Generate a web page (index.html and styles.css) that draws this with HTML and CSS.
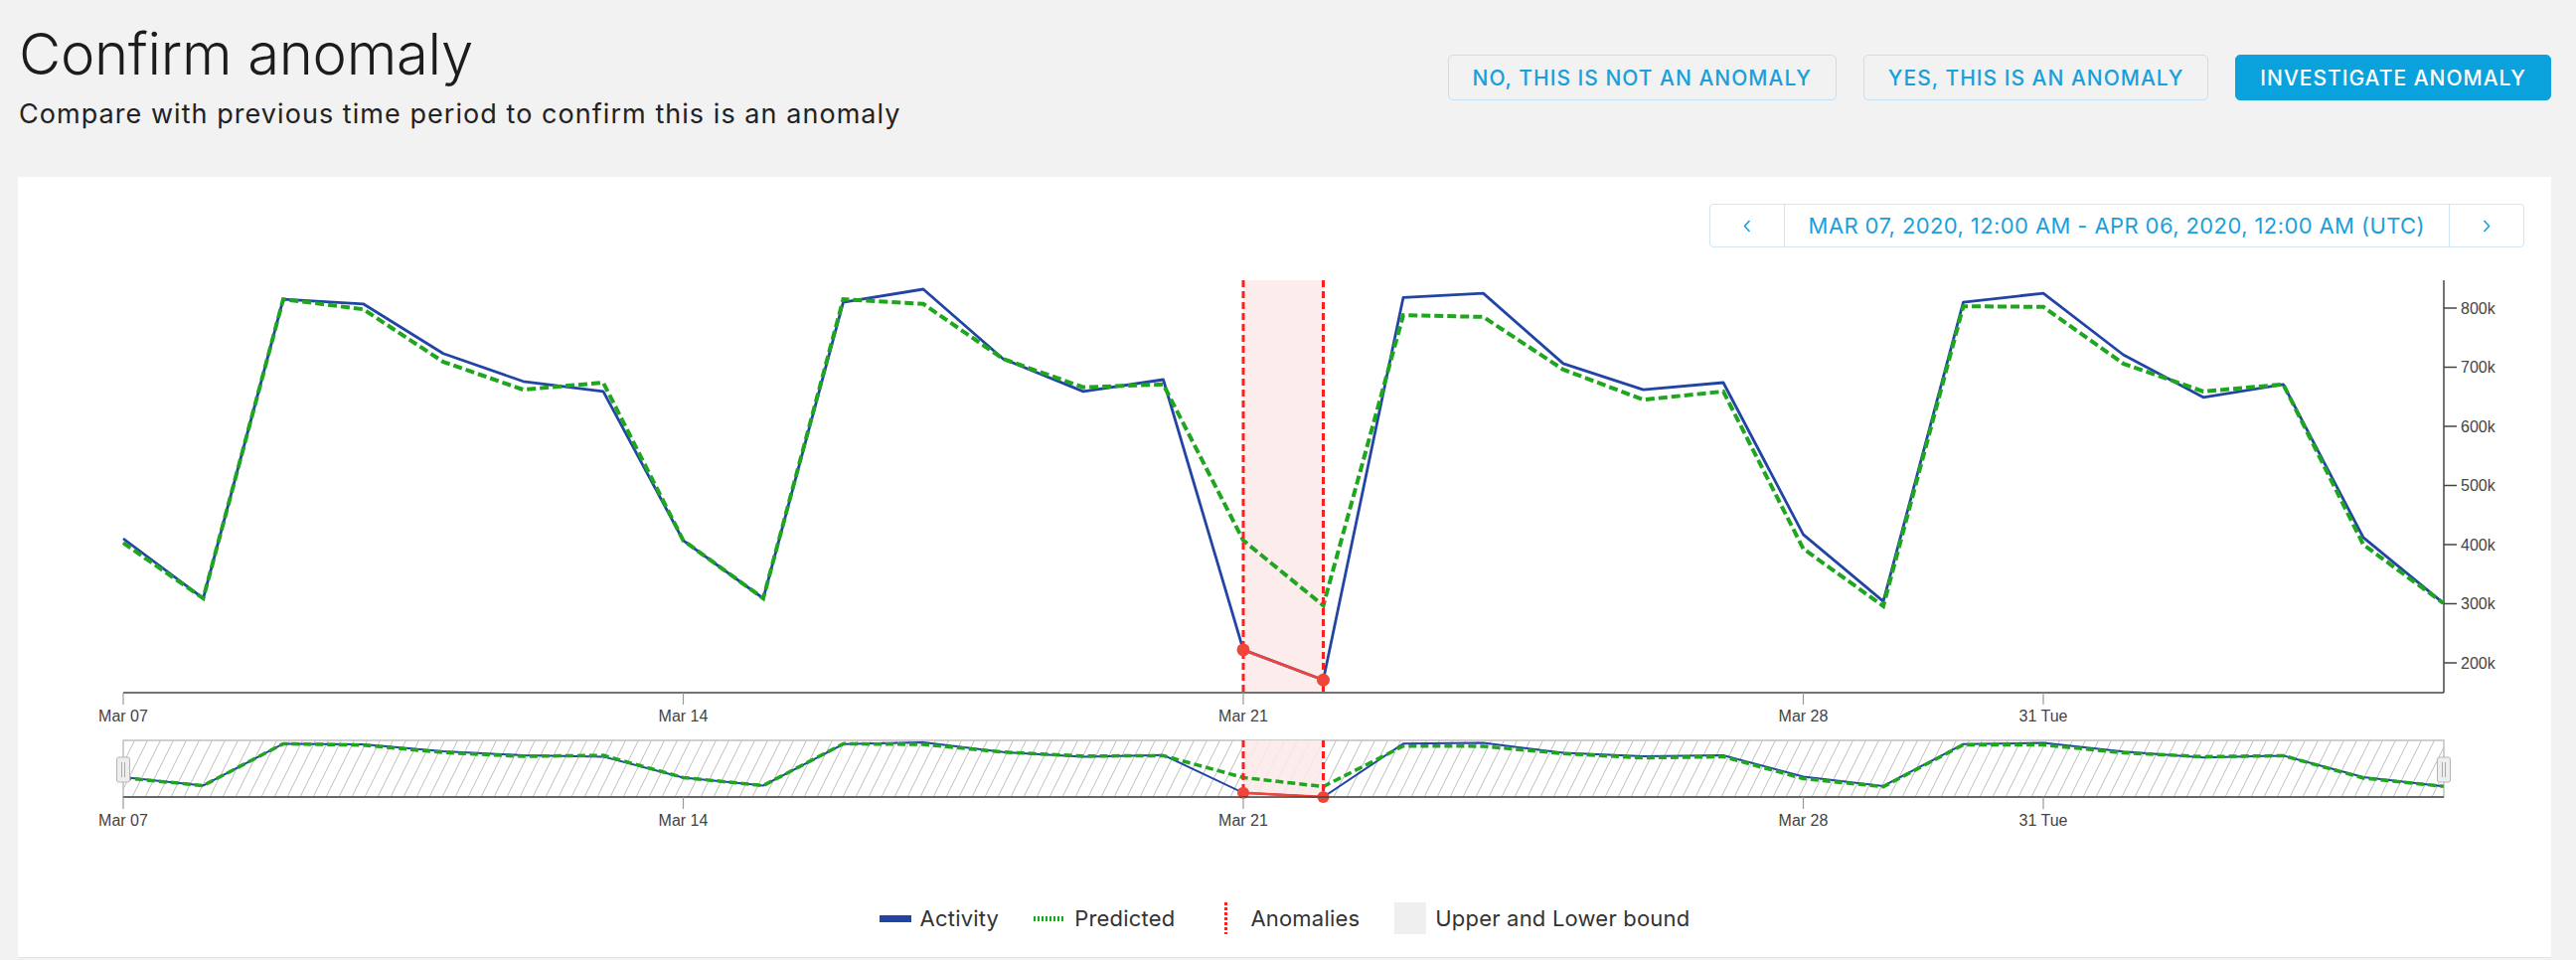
FILE: index.html
```html
<!DOCTYPE html>
<html lang="en">
<head>
    <meta charset="UTF-8">
    <meta name="viewport" content="width=device-width, initial-scale=1.0">
    <title>Confirm anomaly</title>
    <link rel="stylesheet" href="styles.css">
</head>
<body>
    <div class="page">
        <header class="page-header">
            <div class="heading">
                <h1 class="title">Confirm anomaly</h1>
                <p class="subtitle">Compare with previous time period to confirm this is an anomaly</p>
            </div>
            <div class="actions">
                <button class="btn">No, this is not an anomaly</button>
                <button class="btn">Yes, this is an anomaly</button>
                <button class="btn btn-primary">Investigate anomaly</button>
            </div>
        </header>

        <section class="card">
            <div class="toolbar">
                <div class="range-picker">
                    <button class="range-nav">
                        <svg width="8" height="13" viewBox="0 0 8 13"><polyline points="6.5,1 1.5,6.5 6.5,12" /></svg>
                    </button>
                    <span class="range-label">Mar 07, 2020, 12:00 AM - Apr 06, 2020, 12:00 AM (UTC)</span>
                    <button class="range-nav">
                        <svg width="8" height="13" viewBox="0 0 8 13"><polyline points="1.5,1 6.5,6.5 1.5,12" /></svg>
                    </button>
                </div>
            </div>

            <svg class="chart" id="chart" viewBox="18 262 2549 583"></svg>

            <ul class="legend">
                <li class="legend-item"><span class="swatch swatch-activity"></span>Activity</li>
                <li class="legend-item"><span class="swatch swatch-predicted"></span>Predicted</li>
                <li class="legend-item"><span class="swatch swatch-anomaly"></span>Anomalies</li>
                <li class="legend-item"><span class="swatch swatch-bound"></span>Upper and Lower bound</li>
            </ul>
        </section>
    </div>

    <script>
        document.addEventListener('DOMContentLoaded', function() {
            const chart = document.getElementById('chart');

            // daily values in thousands, Mar 07 .. Apr 05
            const activity = [410, 309, 815, 807, 723, 676, 659, 407, 309, 810, 832, 714, 659, 679, 222,
                              171, 818, 825, 706, 662, 674, 417, 304, 810, 825, 721, 649, 671, 412, 301];
            const predicted = [403, 309, 815, 798, 709, 662, 674, 407, 309, 815, 807, 714, 666, 671, 407,
                               297, 788, 785, 696, 645, 659, 393, 296, 803, 802, 706, 659, 671, 400, 301];
            const anomalies = [14, 15];

            const X0 = 124, DAY = 80.5, RIGHT = 2459;
            const TOP = 280, BASE = 695;
            const BRUSH_TOP = 743, BRUSH_BASE = 800;

            const x = i => X0 + i * DAY;
            const y = v => 665 - (v - 200) * 0.595;
            const my = v => 745 + (832 - v) * 55 / 661;
            const line = (arr, fy) => arr.map((v, i) => x(i).toFixed(1) + ',' + fy(v).toFixed(1)).join(' ');

            const ticks = [
                { i: 0, label: 'Mar 07' },
                { i: 7, label: 'Mar 14' },
                { i: 14, label: 'Mar 21' },
                { i: 21, label: 'Mar 28' },
                { i: 24, label: '31 Tue' }
            ];

            const a0 = x(anomalies[0]), a1 = x(anomalies[1]);
            let out = '';

            out += '<defs><pattern id="hatch" width="13" height="26" patternUnits="userSpaceOnUse">' +
                   '<path d="M0 26 L13 0 M-1 2 L1 -2 M12 28 L14 24" class="hatch-line"/></pattern></defs>';

            // anomaly band
            out += `<rect class="band" x="${a0}" y="${TOP}" width="${a1 - a0}" height="${BASE - TOP}"/>`;

            // y axis on the right
            out += `<line class="axis" x1="${RIGHT}" y1="${TOP}" x2="${RIGHT}" y2="${BASE}"/>`;
            for (let v = 200; v <= 800; v += 100) {
                const ty = y(v);
                out += `<line class="axis" x1="${RIGHT}" y1="${ty}" x2="${RIGHT + 13}" y2="${ty}"/>`;
                out += `<text class="tick-label" x="${RIGHT + 17}" y="${ty}" dominant-baseline="central">${v}k</text>`;
            }

            // x axis + labels
            out += `<line class="axis" x1="${X0}" y1="${BASE}" x2="${RIGHT}" y2="${BASE}"/>`;
            ticks.forEach(t => {
                out += `<line class="tick" x1="${x(t.i)}" y1="${BASE}" x2="${x(t.i)}" y2="${BASE + 12}"/>`;
                out += `<text class="tick-label" x="${x(t.i)}" y="${BASE + 23}" text-anchor="middle" dominant-baseline="central">${t.label}</text>`;
            });

            // series
            out += `<polyline class="series-activity" points="${line(activity, y)}"/>`;
            out += `<polyline class="series-predicted" points="${line(predicted, y)}"/>`;

            anomalies.forEach(i => {
                out += `<line class="anomaly-line" x1="${x(i)}" y1="${TOP}" x2="${x(i)}" y2="${BASE}"/>`;
            });
            out += `<polyline class="anomaly-path" points="${anomalies.map(i => x(i) + ',' + y(activity[i])).join(' ')}"/>`;
            anomalies.forEach(i => {
                out += `<circle class="anomaly-dot" cx="${x(i)}" cy="${y(activity[i])}" r="6.5"/>`;
            });

            // brush / overview
            out += `<rect class="brush" x="${X0}" y="${BRUSH_TOP}" width="${RIGHT - X0}" height="${BRUSH_BASE - BRUSH_TOP}"/>`;
            out += `<rect class="band" x="${a0}" y="${BRUSH_TOP}" width="${a1 - a0}" height="${BRUSH_BASE - BRUSH_TOP}"/>`;
            out += `<polyline class="mini-activity" points="${line(activity, my)}"/>`;
            out += `<polyline class="mini-predicted" points="${line(predicted, my)}"/>`;
            anomalies.forEach(i => {
                out += `<line class="anomaly-line" x1="${x(i)}" y1="${BRUSH_TOP}" x2="${x(i)}" y2="${BRUSH_BASE}"/>`;
            });
            out += `<polyline class="anomaly-path" points="${anomalies.map(i => x(i) + ',' + my(activity[i])).join(' ')}"/>`;
            anomalies.forEach(i => {
                out += `<circle class="anomaly-dot" cx="${x(i)}" cy="${my(activity[i])}" r="6"/>`;
            });

            out += `<line class="axis" x1="${X0}" y1="${BRUSH_BASE}" x2="${RIGHT}" y2="${BRUSH_BASE}"/>`;
            ticks.forEach(t => {
                out += `<line class="tick" x1="${x(t.i)}" y1="${BRUSH_BASE}" x2="${x(t.i)}" y2="${BRUSH_BASE + 12}"/>`;
                out += `<text class="tick-label" x="${x(t.i)}" y="${BRUSH_BASE + 23}" text-anchor="middle" dominant-baseline="central">${t.label}</text>`;
            });

            // brush handles
            [X0, RIGHT].forEach(hx => {
                out += `<rect class="handle" x="${hx - 6.5}" y="760" width="13" height="25" rx="2"/>`;
                out += `<line class="handle-grip" x1="${hx - 1.5}" y1="765" x2="${hx - 1.5}" y2="780"/>`;
                out += `<line class="handle-grip" x1="${hx + 1.5}" y1="765" x2="${hx + 1.5}" y2="780"/>`;
            });

            chart.innerHTML = out;
        });
    </script>
</body>
</html>
```

FILE: styles.css
```css
body {
    margin: 0;
    background-color: #f2f2f2;
    color: #222;
    font-family: 'Inter', 'Noto Sans', sans-serif;
}

.page {
    padding: 0 25px 0 18px;
}

.page-header {
    display: flex;
    justify-content: space-between;
    align-items: flex-start;
    height: 178px;
}

.heading {
    padding-top: 25px;
    padding-left: 1px;
}

.title {
    margin: 0;
    font-size: 58px;
    font-weight: 300;
    line-height: 58px;
    letter-spacing: -0.3px;
    color: #1c1c1c;
}

.subtitle {
    margin: 16px 0 0;
    font-size: 27px;
    line-height: 32px;
    letter-spacing: 1.05px;
    color: #222;
}

.actions {
    display: flex;
    gap: 27px;
    padding-top: 55px;
}

.btn {
    height: 46px;
    padding: 0 24px;
    border: 1px solid #c4e0f2;
    border-radius: 5px;
    background: transparent;
    color: #1a9fdb;
    font-family: 'Inter', sans-serif;
    font-size: 21px;
    font-weight: 500;
    letter-spacing: 1px;
    text-transform: uppercase;
    cursor: pointer;
}

.btn-primary {
    background-color: #0aa2dd;
    border-color: #0aa2dd;
    color: #fff;
}

.card {
    height: 786px;
    box-sizing: border-box;
    background-color: #fff;
    border-bottom: 1px solid #e4e4e4;
}

.toolbar {
    display: flex;
    justify-content: flex-end;
    padding: 27px 27px 0;
}

.range-picker {
    display: flex;
    height: 42px;
    border: 1px solid #cfe6f4;
    border-radius: 4px;
}

.range-nav {
    width: 74px;
    border: none;
    background: none;
    display: flex;
    align-items: center;
    justify-content: center;
    cursor: pointer;
}

.range-nav polyline {
    fill: none;
    stroke: #1a9fdb;
    stroke-width: 1.6;
}

.range-label {
    display: flex;
    align-items: center;
    padding: 0 24px;
    border-left: 1px solid #cfe6f4;
    border-right: 1px solid #cfe6f4;
    color: #1a9fdb;
    font-size: 22px;
    letter-spacing: 0.4px;
    text-transform: uppercase;
}

.chart {
    display: block;
    width: 2549px;
    height: 583px;
    margin-top: 15px;
}

.chart .axis {
    stroke: #444;
    stroke-width: 1.5;
}

.chart .tick {
    stroke: #999;
    stroke-width: 1.2;
}

.chart .tick-label {
    font-family: 'Liberation Sans', Arial, sans-serif;
    font-size: 16px;
    fill: #444;
}

.chart .band {
    fill: #fde9e9;
    fill-opacity: 0.85;
}

.chart .series-activity {
    fill: none;
    stroke: #2244a4;
    stroke-width: 2.8;
    stroke-linejoin: round;
}

.chart .series-predicted {
    fill: none;
    stroke: #1fa61f;
    stroke-width: 4;
    stroke-dasharray: 9 4;
}

.chart .anomaly-line {
    stroke: #ff1f1f;
    stroke-width: 3;
    stroke-dasharray: 7 4;
}

.chart .anomaly-path {
    fill: none;
    stroke: #f2453a;
    stroke-width: 2.5;
}

.chart .anomaly-dot {
    fill: #f2453a;
}

.chart .brush {
    fill: url(#hatch);
    stroke: #c0c0c0;
    stroke-width: 1.5;
}

.chart .hatch-line {
    stroke: #bdbdbd;
    stroke-width: 1;
}

.chart .mini-activity {
    fill: none;
    stroke: #2244a4;
    stroke-width: 2;
}

.chart .mini-predicted {
    fill: none;
    stroke: #1fa61f;
    stroke-width: 3.5;
    stroke-dasharray: 8 4;
}

.chart .handle {
    fill: #eee;
    stroke: #b5b5b5;
    stroke-width: 1;
}

.chart .handle-grip {
    stroke: #aaa;
    stroke-width: 1;
}

.legend {
    list-style: none;
    margin: 61px 0 0;
    padding: 0;
    display: flex;
    justify-content: center;
    gap: 35px;
}

.legend-item {
    display: flex;
    align-items: center;
    gap: 9px;
    height: 32px;
    font-size: 22px;
    letter-spacing: 0.2px;
    color: #333;
}

.swatch {
    width: 32px;
}

.swatch-activity {
    height: 7px;
    background-color: #2244a4;
}

.swatch-predicted {
    height: 5px;
    background: repeating-linear-gradient(to right, #1fa61f 0 2px, transparent 2px 4px);
}

.swatch-anomaly {
    height: 32px;
    background: repeating-linear-gradient(to bottom, #ff1f1f 0 3px, transparent 3px 5px) center / 3px 100% no-repeat;
}

.swatch-bound {
    height: 32px;
    background-color: #efefef;
}
```
